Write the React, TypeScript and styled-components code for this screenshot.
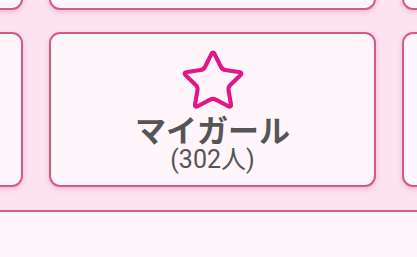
import React from "react";
import styled, { createGlobalStyle } from "styled-components";

const Global = createGlobalStyle`
  html, body { margin: 0; padding: 0; background: #fef6fa; }
  body { font-family: Roboto, "Noto Sans CJK JP", sans-serif; }
`;

const Page = styled.div`
  width: 417px;
  height: 257px;
  overflow: hidden;
  background: #fef6fa;
`;

const Board = styled.div`
  height: 210px;
  overflow: hidden;
  background: #fce3ef;
  border-bottom: 2px solid #d4607f;
`;

const Grid = styled.div`
  display: grid;
  grid-template-columns: repeat(3, 327px);
  grid-auto-rows: 155px;
  column-gap: 26px;
  row-gap: 22px;
  margin-left: -304px;
  margin-top: -145px;
`;

const Card = styled.div`
  box-sizing: border-box;
  border: 2px solid #d35d82;
  border-radius: 11px;
  background: #fff6fb;
  box-shadow: 0 2px 5px rgba(200, 80, 130, 0.28);
  display: flex;
  flex-direction: column;
  align-items: center;
  justify-content: flex-start;
  padding-top: 13px;
`;

const StarIcon = styled.svg`
  width: 68px;
  height: 68px;
  display: block;
  margin-bottom: -3px;
  flex: none;
`;

const Title = styled.div`
  font-family: "Noto Sans CJK JP", sans-serif;
  font-weight: 700;
  font-size: 31px;
  line-height: 34px;
  color: #555;
`;

const Count = styled.div`
  font-family: Roboto, "Noto Sans CJK JP", sans-serif;
  font-size: 25px;
  line-height: 28px;
  color: #555;
`;

const Star = () => (
  <StarIcon viewBox="0 0 24 24" fill="none" stroke="#e0168a" strokeWidth={1.45} strokeLinejoin="round" strokeLinecap="round">
    <path d="M11.525 2.295a.53.53 0 0 1 .95 0l2.31 4.679a2.123 2.123 0 0 0 1.595 1.16l5.166.756a.53.53 0 0 1 .294.904l-3.736 3.638a2.123 2.123 0 0 0-.611 1.878l.882 5.14a.53.53 0 0 1-.771.56l-4.618-2.428a2.122 2.122 0 0 0-1.973 0L6.396 21.01a.53.53 0 0 1-.77-.56l.881-5.139a2.122 2.122 0 0 0-.611-1.879L2.16 9.795a.53.53 0 0 1 .294-.906l5.165-.755a2.122 2.122 0 0 0 1.597-1.16z" />
  </StarIcon>
);

export default function App() {
  const cells = Array.from({ length: 6 }, (_, i) => i);
  return (
    <Page>
      <Global />
      <Board>
        <Grid>
          {cells.map((i) =>
            i === 4 ? (
              <Card key={i}>
                <Star />
                <Title>マイガール</Title>
                <Count>(302人)</Count>
              </Card>
            ) : (
              <Card key={i} />
            )
          )}
        </Grid>
      </Board>
    </Page>
  );
}
